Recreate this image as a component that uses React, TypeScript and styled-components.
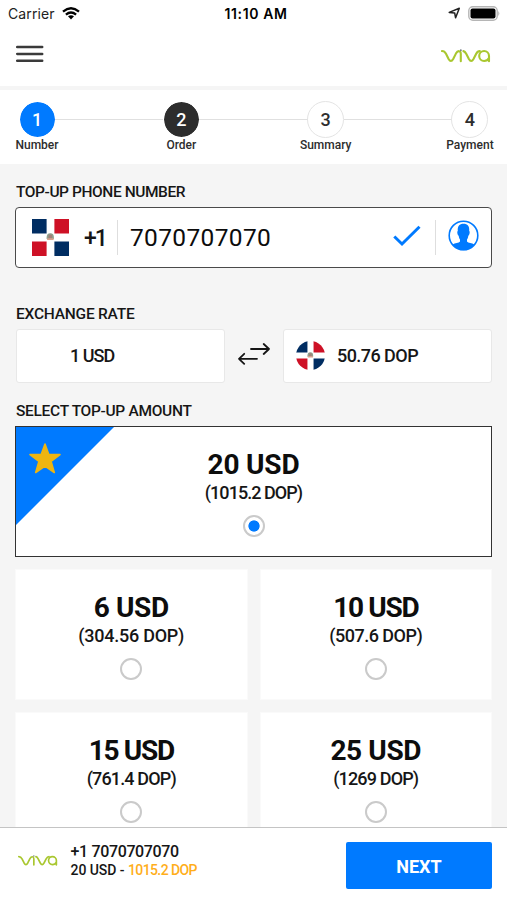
import React from "react";
import styled, { createGlobalStyle } from "styled-components";

const blue = "#007aff";

const GlobalStyle = createGlobalStyle`
  * { box-sizing: border-box; }
  body { margin: 0; background: #f5f5f5; font-family: Roboto, "Liberation Sans", sans-serif; color: #161616; }
  svg { display: block; flex: none; }
  button { font: inherit; border: 0; padding: 0; background: none; color: inherit; }
`;

const Screen = styled.div`
  width: 507px;
  height: 900px;
  display: flex;
  flex-direction: column;
  overflow: hidden;
  background: #f5f5f5;
`;

const StatusBar = styled.div`
  height: 28px;
  flex: none;
  display: grid;
  grid-template-columns: 1fr auto 1fr;
  align-items: center;
  padding: 0 7px 0 12px;
  background: #fff;
  font-family: Inter, "Liberation Sans", sans-serif;
  font-size: 14px;
`;
const Carrier = styled.div`
  display: flex;
  align-items: center;
  gap: 7px;
  margin: -2px 0 0 -4px;
  letter-spacing: 0.1px;
  color: #222;
`;
const Clock = styled.div`
  margin-top: -1px;
  font-weight: 600;
  font-size: 14px;
  letter-spacing: 0.6px;
  color: #000;
`;
const StatusIcons = styled.div`
  display: flex;
  justify-content: flex-end;
  align-items: center;
  gap: 7px;
  padding-bottom: 2px;
`;

const Header = styled.header`
  height: 58px;
  flex: none;
  display: flex;
  justify-content: space-between;
  padding: 17px 16px 0;
  background: #fff;
`;
const MenuButton = styled.button`
  width: 28px;
  height: 18px;
`;
const BrandSlot = styled.div`
  padding-top: 4px;
`;

const Steps = styled.nav`
  height: 74px;
  flex: none;
  margin-top: 4px;
  padding: 11px 1px 0;
  display: flex;
  align-items: flex-start;
  background: #fff;
`;
const Step = styled.div`
  width: 72px;
  flex: none;
  display: flex;
  flex-direction: column;
  align-items: center;
`;
const StepCircle = styled.div<{ $tone: "done" | "current" | "todo" }>`
  width: 37px;
  height: 37px;
  border-radius: 50%;
  display: flex;
  align-items: center;
  justify-content: center;
  font-size: 18px;
  font-weight: 500;
  border: 1px solid ${(p) => (p.$tone === "todo" ? "#e4e4e4" : "#fff")};
  background: ${(p) => (p.$tone === "done" ? blue : p.$tone === "current" ? "#2d2d2d" : "#fff")};
  background-clip: padding-box;
  color: ${(p) => (p.$tone === "todo" ? "#2d2d2d" : "#fff")};
`;
const StepLabel = styled.div`
  margin-top: -1px;
  font-size: 12px;
  line-height: 16px;
  font-weight: 500;
  color: #2d2d2d;
`;
const StepLine = styled.div`
  flex: 1;
  height: 1px;
  margin: 18px -18px 0;
  background: #e0e0e0;
`;

const Content = styled.main`
  flex: 1;
  min-height: 0;
  overflow: hidden;
  padding: 19px 15px 0;
`;
const SectionLabel = styled.h2<{ $top?: number; $spacing: number }>`
  margin: ${(p) => p.$top ?? 0}px 0 6px 1px;
  font-size: 15.5px;
  line-height: 18px;
  font-weight: 500;
  letter-spacing: ${(p) => p.$spacing}px;
`;

const PhoneField = styled.div`
  height: 61px;
  display: flex;
  align-items: center;
  padding: 0 12px 0 16px;
  background: #fff;
  border: 1px solid #4a4a4a;
  border-radius: 4px;
`;
const DialCode = styled.span`
  width: 33px;
  margin: 1px 0 0 15px;
  font-size: 23px;
  font-weight: 500;
  letter-spacing: -2px;
`;
const Divider = styled.span<{ $before?: number }>`
  width: 1px;
  height: 35px;
  margin-left: ${(p) => p.$before ?? 0}px;
  background: #dedede;
`;
const PhoneNumber = styled.span`
  flex: 1;
  margin-left: 12px;
  font-size: 24.5px;
  letter-spacing: 0.35px;
  color: #0c0c0c;
`;
const ContactSlot = styled.span`
  margin: -4px 0 0 12px;
`;
const CheckSlot = styled.span`
  margin: -3px -1px 0 1px;
`;

const RateRow = styled.div`
  display: flex;
  align-items: center;
  justify-content: space-between;
  margin-left: 1px;
`;
const RateBox = styled.div`
  width: 209px;
  height: 54px;
  display: flex;
  align-items: center;
  padding-left: 12px;
  background: #fff;
  border: 1px solid #e8e8e8;
  border-radius: 3px;
`;
const FlagSlot = styled.span`
  width: 41px;
  padding-bottom: 1px;
`;
const SwapSlot = styled.span`
  padding-bottom: 4px;
`;
const RateText = styled.span<{ $spacing: number }>`
  margin-top: -1px;
  font-size: 18px;
  font-weight: 500;
  letter-spacing: ${(p) => p.$spacing}px;
`;

const AmountGrid = styled.div`
  display: grid;
  grid-template-columns: 1fr 1fr;
  gap: 12px;
`;
const AmountCard = styled.div<{ $featured?: boolean }>`
  position: relative;
  height: 131px;
  grid-column: ${(p) => (p.$featured ? "1 / -1" : "auto")};
  display: flex;
  flex-direction: column;
  align-items: center;
  padding-top: 21px;
  background: #fff;
  border: 1px solid ${(p) => (p.$featured ? "#333" : "#fafafa")};
`;
const Ribbon = styled.div`
  position: absolute;
  top: 0;
  left: 0;
`;
const Amount = styled.div<{ $spacing: number }>`
  font-size: 28px;
  line-height: 34px;
  font-weight: 700;
  color: #0d0d0d;
  letter-spacing: ${(p) => p.$spacing}px;
`;
const Converted = styled.div<{ $spacing: number }>`
  font-size: 18px;
  line-height: 22px;
  font-weight: 500;
  letter-spacing: ${(p) => p.$spacing}px;
`;
const Radio = styled.span<{ $checked?: boolean }>`
  width: 22px;
  height: 22px;
  margin-top: 11px;
  border: 2px solid #cacaca;
  border-radius: 50%;
  background: ${(p) => (p.$checked ? `radial-gradient(circle, ${blue} 5.2px, #fff 6px)` : "#fff")};
  background-clip: padding-box;
`;

const Footer = styled.footer`
  height: 73px;
  flex: none;
  display: flex;
  align-items: flex-start;
  padding: 14px 15px 0 18px;
  background: #fff;
  border-top: 1px solid #c4c4c4;
`;
const FooterBrand = styled.div`
  width: 52.5px;
  padding-top: 13px;
`;
const Summary = styled.div`
  flex: 1;
  padding-top: 1px;
  font-weight: 500;
`;
const SummaryPhone = styled.div`
  font-size: 16px;
  line-height: 18px;
  letter-spacing: -0.35px;
`;
const SummaryAmount = styled.div`
  font-size: 14px;
  line-height: 18px;
  letter-spacing: -0.05px;
`;
const Highlight = styled.span`
  color: #ffae1a;
  letter-spacing: -0.6px;
`;
const NextButton = styled.button`
  width: 146px;
  height: 47px;
  padding-top: 2px;
  border-radius: 2px;
  background: ${blue};
  color: #fff;
  font-size: 18px;
  font-weight: 700;
`;

function Viva({ width }: { width: number }) {
  return (
    <svg width={width} height={width * 0.28} viewBox="0 0 50 14" fill="none" stroke="#a9c72f" strokeWidth="2.1" strokeLinecap="round" strokeLinejoin="round">
      <path d="M1 2C3.2 2 4 2.8 5 4.8L7.6 10Q9.9 14 12.2 10L14.9 4.6Q16.4 1.9 18.2 2.2Q19.8 2.4 19.8 5V12.3" />
      <path d="M22.4 2.1Q24 2.4 25.2 4.8L27.9 10Q30.2 14 32.5 10L35.2 4.8Q36.6 2.1 38.8 2.1" />
      <path d="M48 12.3V7A4.9 5 0 1 0 43.1 12Q46.5 12 48 9" />
      <circle cx="19.8" cy="1.3" r="1" fill="#78808b" stroke="none" />
    </svg>
  );
}

function Flag({ size, round }: { size: number; round?: boolean }) {
  return (
    <svg width={size} height={size} viewBox="0 0 38 38">
      <defs>
        <clipPath id="round-flag"><circle cx="19" cy="19" r="19" /></clipPath>
      </defs>
      <g clipPath={round ? "url(#round-flag)" : undefined}>
        <path d="M0 0H38V38H0Z" fill="#fff" />
        <path d="M0 0H15V15H0ZM23 23H38V38H23Z" fill="#002d62" />
        <path d="M23 0H38V15H23ZM0 23H15V38H0Z" fill="#ce1126" />
      </g>
      <path d="M15 19Q15 14.6 18.8 14.6T22.5 19V20.5H15Z" fill="#8fa08c" />
      <path d="M17 16.2H20.6V20H17Z" fill="#a28078" />
      <path d="M15.5 19.8H22.2V21.6H15.5Z" fill="#d8a08c" />
    </svg>
  );
}

function WifiIcon() {
  return (
    <svg width="18" height="13" viewBox="0 0 18 13" fill="none" stroke="#000" strokeWidth="2.3">
      <path d="M1 4.6Q9-2.1 17 4.6M3.9 7.6Q9 3.4 14.1 7.6" />
      <path d="M6 9.3Q9 7 12 9.3L9 12.6Z" fill="#000" stroke="none" />
    </svg>
  );
}

function LocationIcon() {
  return (
    <svg width="13" height="12" viewBox="0 0 13 12" fill="none" stroke="#222" strokeWidth="1.5" strokeLinejoin="round">
      <path d="M1.2 5.4L11.3 1.2L7.6 10.8L6.7 6Z" />
    </svg>
  );
}

function BatteryIcon() {
  return (
    <svg width="32" height="15" viewBox="0 0 32 15">
      <rect x="0.8" y="0.8" width="28.4" height="13.4" rx="4" fill="#fff" stroke="#b5b5b5" strokeWidth="1.4" />
      <rect x="2.5" y="2.6" width="25" height="9.8" rx="2" fill="#000" />
      <path d="M30.4 5Q32.2 7.5 30.4 10Z" fill="#a8a8a8" />
    </svg>
  );
}

function MenuIcon() {
  return (
    <svg width="28" height="18" viewBox="0 0 28 18" stroke="#3a3a3a" strokeWidth="2.5" strokeLinecap="round">
      <path d="M1.2 2.1H26.2M1.2 8.9H26.2M1.2 15.8H26.2" />
    </svg>
  );
}

function CheckIcon() {
  return (
    <svg width="28" height="22" viewBox="0 0 28 22" fill="none" stroke={blue} strokeWidth="3">
      <path d="M1.3 11.5L9 19L26.5 1.7" />
    </svg>
  );
}

function ContactIcon() {
  return (
    <svg width="31" height="31" viewBox="0 0 31 31">
      <circle cx="15.5" cy="15.5" r="14.3" fill="#fff" stroke={blue} strokeWidth="1.6" />
      <path d="M9.8 11C9.4 6 11.5 3.8 15.5 3.8S21.6 6 21.2 11C22.3 11.5 21.4 15.4 20.3 15.7C20 18 19.5 18.8 19 19.4V21.5C20 23 24.3 23 26.2 24.5Q22 30.3 15.5 30.3T4.8 24.5C6.7 23 11 23 12 21.5V19.4C11.5 18.8 11 18 10.7 15.7C9.6 15.4 8.7 11.5 9.8 11Z" fill={blue} />
    </svg>
  );
}

function SwapIcon() {
  return (
    <svg width="34" height="22" viewBox="0 0 34 22" fill="none" stroke="#151515" strokeWidth="1.8" strokeLinecap="round" strokeLinejoin="round">
      <path d="M14 6H32M26.7 1L32 6L26.7 11M20 15.8H2M7.2 10.8L2 15.8L7.2 20.8" />
    </svg>
  );
}

function FeaturedRibbon() {
  return (
    <svg width="98" height="98" viewBox="0 0 98 98">
      <path d="M0 0H98L0 98Z" fill={blue} />
      <path d="M29 17L32.7 27.3L44 27.6L35.1 34.4L38.3 45.5L29 39.1L19.7 45.5L22.9 34.4L14 27.6L25.3 27.3Z" fill="#eeb510" stroke="#eeb510" strokeWidth="1.6" strokeLinejoin="round" />
    </svg>
  );
}

type Tone = "done" | "current" | "todo";
const steps: { label: string; tone: Tone }[] = [
  { label: "Number", tone: "done" },
  { label: "Order", tone: "current" },
  { label: "Summary", tone: "todo" },
  { label: "Payment", tone: "todo" },
];

const amounts = [
  { usd: "20 USD", dop: "(1015.2 DOP)", featured: true, usdSpacing: -0.2, dopSpacing: -0.95 },
  { usd: "6 USD", dop: "(304.56 DOP)", usdSpacing: -0.4, dopSpacing: -0.25 },
  { usd: "10 USD", dop: "(507.6 DOP)", usdSpacing: -1.3, dopSpacing: -0.5 },
  { usd: "15 USD", dop: "(761.4 DOP)", usdSpacing: -1.3, dopSpacing: -0.85 },
  { usd: "25 USD", dop: "(1269 DOP)", usdSpacing: -0.4, dopSpacing: -0.85 },
];

export default function App() {
  return (
    <>
      <GlobalStyle />
      <Screen>
        <StatusBar>
          <Carrier>Carrier <WifiIcon /></Carrier>
          <Clock>11:10 AM</Clock>
          <StatusIcons><LocationIcon /><BatteryIcon /></StatusIcons>
        </StatusBar>
        <Header>
          <MenuButton aria-label="Menu"><MenuIcon /></MenuButton>
          <BrandSlot><Viva width={50} /></BrandSlot>
        </Header>
        <Steps>
          {steps.map((s, i) => (
            <React.Fragment key={s.label}>
              {i > 0 && <StepLine />}
              <Step>
                <StepCircle $tone={s.tone}>{i + 1}</StepCircle>
                <StepLabel>{s.label}</StepLabel>
              </Step>
            </React.Fragment>
          ))}
        </Steps>
        <Content>
          <SectionLabel $spacing={-0.42}>TOP-UP PHONE NUMBER</SectionLabel>
          <PhoneField>
            <Flag size={37} />
            <DialCode>+1</DialCode>
            <Divider />
            <PhoneNumber>7070707070</PhoneNumber>
            <CheckSlot><CheckIcon /></CheckSlot>
            <Divider $before={15} />
            <ContactSlot><ContactIcon /></ContactSlot>
          </PhoneField>
          <SectionLabel $top={37} $spacing={-0.22}>EXCHANGE RATE</SectionLabel>
          <RateRow>
            <RateBox><FlagSlot /><RateText $spacing={-1}>1 USD</RateText></RateBox>
            <SwapSlot><SwapIcon /></SwapSlot>
            <RateBox><FlagSlot><Flag size={29} round /></FlagSlot><RateText $spacing={-0.55}>50.76 DOP</RateText></RateBox>
          </RateRow>
          <SectionLabel $top={19} $spacing={-0.3}>SELECT TOP-UP AMOUNT</SectionLabel>
          <AmountGrid>
            {amounts.map((x) => (
              <AmountCard key={x.usd} $featured={x.featured}>
                {x.featured && <Ribbon><FeaturedRibbon /></Ribbon>}
                <Amount $spacing={x.usdSpacing}>{x.usd}</Amount>
                <Converted $spacing={x.dopSpacing}>{x.dop}</Converted>
                <Radio $checked={x.featured} />
              </AmountCard>
            ))}
          </AmountGrid>
        </Content>
        <Footer>
          <FooterBrand><Viva width={40} /></FooterBrand>
          <Summary>
            <SummaryPhone>+1 7070707070</SummaryPhone>
            <SummaryAmount>20 USD - <Highlight>1015.2 DOP</Highlight></SummaryAmount>
          </Summary>
          <NextButton>NEXT</NextButton>
        </Footer>
      </Screen>
    </>
  );
}
